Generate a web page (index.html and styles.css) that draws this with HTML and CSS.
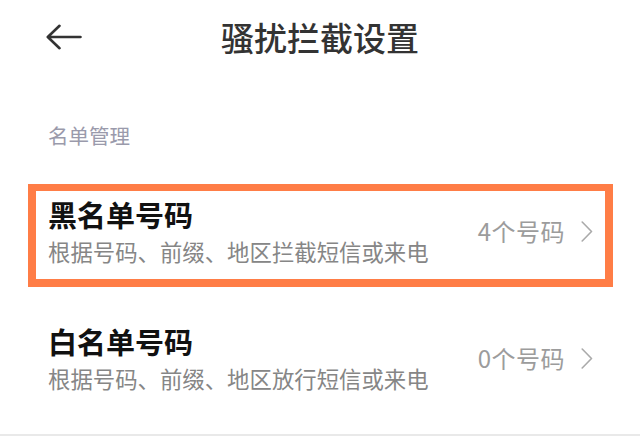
FILE: index.html
```html
<!DOCTYPE html>
<html lang="zh-CN">
<head>
<meta charset="utf-8">
<title>骚扰拦截设置</title>
<link rel="stylesheet" href="styles.css">
</head>
<body>
<div class="page">
  <header class="header">
    <div class="header-left">
      <svg class="back" width="36" height="26" viewBox="0 0 36 26" aria-hidden="true">
        <path d="M13.5 1.8 L1.8 13 L13.5 24.2 M2 13 H34.5" fill="none" stroke="#333" stroke-width="2.6" stroke-linecap="round" stroke-linejoin="round"/>
      </svg>
    </div>
    <h1 class="title">骚扰拦截设置</h1>
    <div class="header-right"></div>
  </header>

  <div class="section-label">名单管理</div>

  <ul class="list">
    <li class="row is-highlighted">
      <div class="row-text">
        <div class="row-title">黑名单号码</div>
        <div class="row-sub">根据号码、前缀、地区拦截短信或来电</div>
      </div>
      <div class="row-value">
        <span class="value-text">4个号码</span>
        <svg class="chevron" width="12" height="21" viewBox="0 0 12 21" aria-hidden="true">
          <path d="M1.2 1 L10.5 10.5 L1.2 20" fill="none" stroke="#aaaaaa" stroke-width="1.6" stroke-linecap="round" stroke-linejoin="round"/>
        </svg>
      </div>
    </li>
    <li class="row">
      <div class="row-text">
        <div class="row-title">白名单号码</div>
        <div class="row-sub">根据号码、前缀、地区放行短信或来电</div>
      </div>
      <div class="row-value">
        <span class="value-text">0个号码</span>
        <svg class="chevron" width="12" height="21" viewBox="0 0 12 21" aria-hidden="true">
          <path d="M1.2 1 L10.5 10.5 L1.2 20" fill="none" stroke="#aaaaaa" stroke-width="1.6" stroke-linecap="round" stroke-linejoin="round"/>
        </svg>
      </div>
    </li>
  </ul>
  <div class="section-gap"></div>
</div>
</body>
</html>
```

FILE: styles.css
```css
html, body {
  margin: 0;
  padding: 0;
  background: #ffffff;
}

body {
  font-family: "Noto Sans CJK SC", "Noto Sans", sans-serif;
  color: #111111;
  overflow: hidden;
}

.page {
  width: 640px;
}

.header {
  height: 73px;
  display: grid;
  grid-template-columns: 1fr auto 1fr;
  align-items: center;
}

.header-left {
  padding-left: 46px;
  display: flex;
  align-items: center;
}

.back {
  display: block;
}

.title {
  margin: 0;
  font-size: 33px;
  line-height: 40px;
  font-weight: 500;
  color: #333333;
  text-align: center;
}

.section-label {
  padding: 48px 48px 0;
  font-size: 20.5px;
  line-height: 28px;
  color: #9a9aab;
}

.list {
  list-style: none;
  margin: 19px 0 0;
  padding: 0;
}

.row {
  position: relative;
  display: flex;
  align-items: center;
  padding: 28px 47px 29px 48px;
}

.is-highlighted::after {
  content: "";
  position: absolute;
  left: 28px;
  right: 27px;
  top: 16px;
  bottom: 8px;
  border: 8px solid #ff7d46;
  border-top-width: 7px;
  pointer-events: none;
}

.row-text {
  flex: 1;
  min-width: 0;
}

.row-title {
  font-size: 29px;
  line-height: 36px;
  font-weight: 700;
  color: #111111;
}

.row-sub {
  margin-top: 4px;
  font-size: 22.4px;
  line-height: 30px;
  color: #868686;
  white-space: nowrap;
}

.row-value {
  display: flex;
  align-items: center;
  gap: 16px;
}

.value-text {
  font-size: 24px;
  line-height: 30px;
  color: #9c9c9c;
  letter-spacing: 0.5px;
}

.chevron {
  display: block;
}

.section-gap {
  margin-top: 12px;
  height: 20px;
  background: #e9e9e9;
}
```
